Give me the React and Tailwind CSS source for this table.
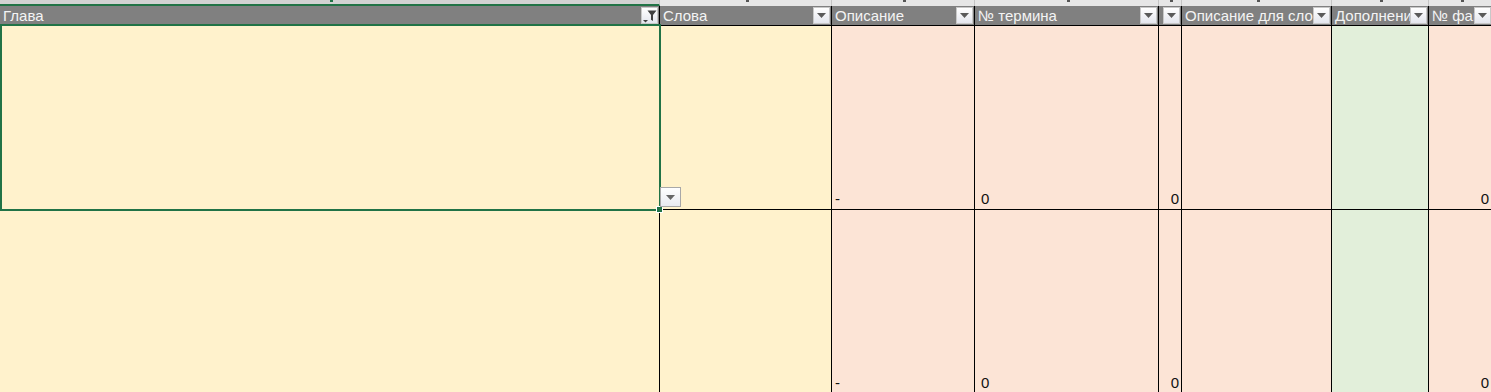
import React from "react";

const cols = [
  { key: "a", label: "Глава", w: "w-[660px]", fill: "bg-[#fff2cc]", filter: true },
  { key: "b", label: "Слова", w: "w-[172px]", fill: "bg-[#fff2cc]" },
  { key: "c", label: "Описание", w: "w-[143px]", fill: "bg-[#fce4d6]", value: "-", pad: "pl-[3px]" },
  { key: "d", label: "№ термина", w: "w-[184px]", fill: "bg-[#fce4d6]", value: "0", pad: "pl-[6px]" },
  { key: "e", label: "", w: "w-[23px]", fill: "bg-[#fce4d6]", value: "0", pad: "justify-end pr-[2px]" },
  { key: "f", label: "Описание для слова", w: "w-[150px]", fill: "bg-[#fce4d6]" },
  { key: "g", label: "Дополнение", w: "w-[97px]", fill: "bg-[#e2efda]" },
  { key: "h", label: "№ факта", w: "w-[64px]", fill: "bg-[#fce4d6]", value: "0", pad: "justify-end pr-[3px]" },
];

function DropButton({ filter }) {
  return (
    <div className="w-[17px] h-[17px] shrink-0 bg-gradient-to-b from-white to-[#e4e6ee] border border-[#c8c8c8] flex items-center justify-center">
      {filter ? (
        <svg width="15" height="14" viewBox="0 0 15 14">
          <path d="M1 11h5l-2.5 2.5z" fill="#404040" />
          <path d="M5.5 1.5h9l-3.5 4.5v6l-2-1.2V6z" fill="#404040" />
        </svg>
      ) : (
        <svg width="9" height="5" viewBox="0 0 9 5">
          <path d="M0 0h9L4.5 5z" fill="#5a5a5a" />
        </svg>
      )}
    </div>
  );
}

function DataRow({ height }) {
  return (
    <div className={`flex ${height} border-b border-black`}>
      {cols.map((c) => (
        <div
          key={c.key}
          className={`${c.w} shrink-0 ${c.fill} border-r border-black flex items-end ${
            c.pad || ""
          } pb-[1px] text-[15px] leading-[18px] text-[#111]`}
        >
          {c.value}
        </div>
      ))}
    </div>
  );
}

export default function App() {
  return (
    <div className="relative w-[1491px] h-[392px] overflow-hidden bg-white font-['Liberation_Sans',Arial,sans-serif]">
      {/* column letters strip (cut off) */}
      <div className="flex h-[6px]">
        {cols.map((c, i) => (
          <div
            key={c.key}
            className={`${c.w} shrink-0 relative border-r border-[#c4c4c4] ${
              i === 0 ? "bg-[#d2d2d2] border-b-2 border-b-[#217346]" : "bg-[#e6e6e6]"
            }`}
          >
            <div
              className={`absolute left-1/2 top-0 w-[3px] h-[2px] ${
                i === 0 ? "bg-[#217346]" : "bg-[#555]"
              }`}
            />
          </div>
        ))}
      </div>

      {/* table header row */}
      <div className="flex h-[20px] border-b border-black bg-[#808080]">
        {cols.map((c) => (
          <div
            key={c.key}
            className={`${c.w} shrink-0 flex items-center border-r border-black`}
          >
            <span className="flex-1 min-w-0 overflow-hidden whitespace-nowrap pl-[3px] text-[15px] leading-[18px] text-[#f4f4f4]">
              {c.label}
            </span>
            <div className="pr-[1px]">
              <DropButton filter={c.filter} />
            </div>
          </div>
        ))}
      </div>

      <DataRow height="h-[184px]" />
      <DataRow height="h-[184px]" />

      {/* selected cell */}
      <div className="absolute left-0 top-[24px] w-[661px] h-[187px] border-2 border-[#217346] pointer-events-none" />
      <div className="absolute left-[656px] top-[206px] w-[7px] h-[7px] bg-[#217346] border border-white" />
      <div className="absolute left-[660px] top-[187px] w-[21px] h-[20px] bg-gradient-to-b from-white to-[#e8eaf0] border border-[#a8a8a8] flex items-center justify-center">
        <svg width="9" height="5" viewBox="0 0 9 5">
          <path d="M0 0h9L4.5 5z" fill="#666" />
        </svg>
      </div>
    </div>
  );
}
